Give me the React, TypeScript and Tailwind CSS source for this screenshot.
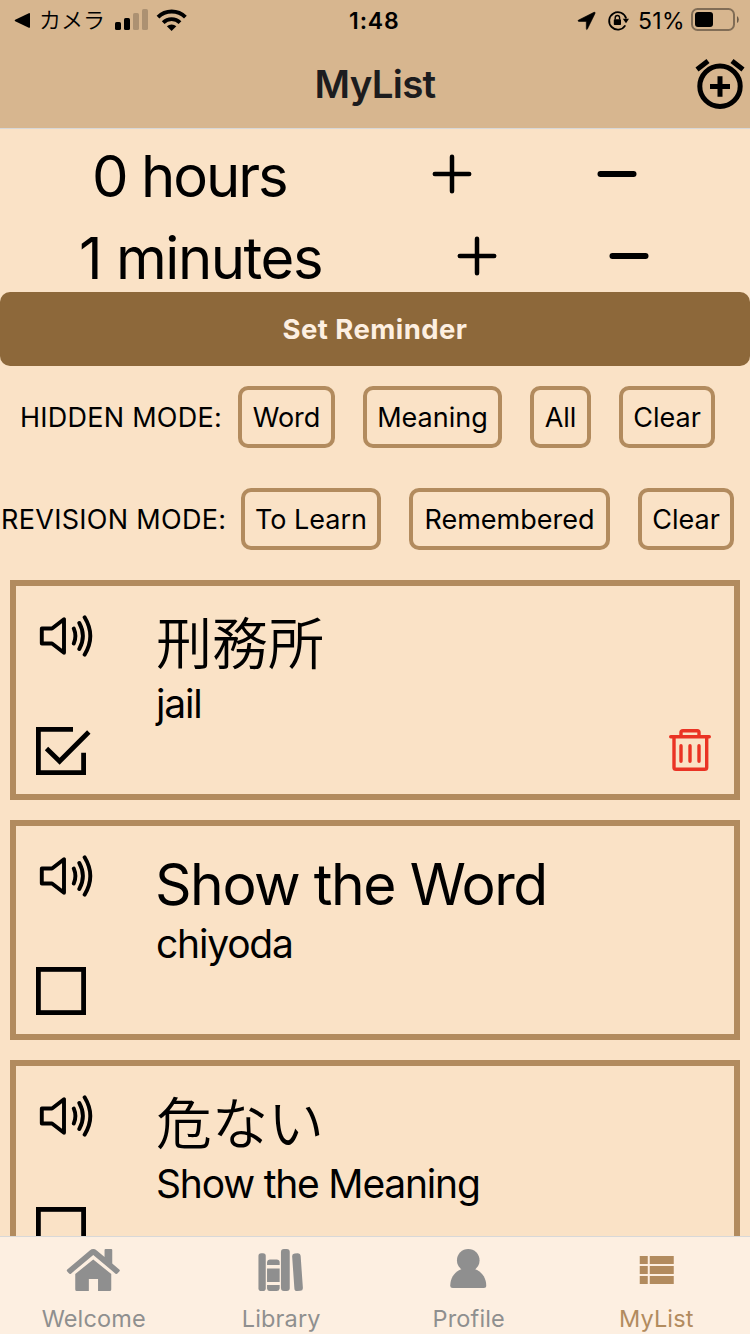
import React from "react";

function StatusBar() {
  return (
    <div className="flex h-10 items-center">
      <svg className="ml-3.5 h-10 w-[18px] shrink-0" viewBox="14 0 18 40">
        <path d="M15.200 19.800 28.800 13.200Q30 12.800 30 14v13q0 1.200-1.200.7L15.200 21.200Q14 20.500 15.200 19.800Z" />
      </svg>
      <span className="ml-[7px] w-[68px] text-[22px] leading-10 font-[350] whitespace-nowrap">カメラ</span>
      <svg className="ml-[6px] h-10 w-[76px] shrink-0" viewBox="113 0 76 40">
        <rect x="115" y="22" width="6" height="8" rx="1.6" />
        <rect x="124" y="18" width="6" height="12" rx="1.6" />
        <rect x="133" y="13" width="6" height="17" rx="1.6" opacity=".2" />
        <rect x="142" y="9" width="6" height="21" rx="1.6" opacity=".2" />
        <g fill="none" stroke="#000" strokeWidth="3.9">
          <path d="M158 17.2A19.4 19.4 0 0 1 185.400 17.200" />
          <path d="M163.200 22.600A12 12 0 0 1 180 22.600" />
        </g>
        <path d="M171.600 31 166.900 26.300A6.800 6.800 0 0 1 176.300 26.300Z" />
      </svg>
      <span className="ml-[160px] w-[56px] pt-px text-[23px] leading-10 font-semibold tracking-[0.900px] whitespace-nowrap">1:48</span>
      <svg className="ml-[172px] h-10 w-[56px] shrink-0" viewBox="577 0 56 40">
        <path d="M578.300 20.200 594 12.300Q595.600 11.800 595 13.500L587.400 29Q586.500 30.300 586.300 28.600V21.400H579Q577.300 21.200 578.300 20.200Z" stroke="#000" strokeWidth=".6" />
        <path d="M625.300 25.400A8.700 8.700 0 1 1 626.200 18.400" fill="none" stroke="#000" strokeWidth="1.800" />
        <path d="M622.800 18.800H629L626 23.200Z" />
        <rect x="613.800" y="19.300" width="7.200" height="5.800" rx=".8" />
        <path d="M615.200 19.500V17.700a2.200 2.200 0 0 1 4.400 0v1.800" fill="none" stroke="#000" strokeWidth="1.400" />
      </svg>
      <span className="ml-[5px] w-[50px] pt-px text-[23px] leading-10 tracking-[0.300px] whitespace-nowrap">51%</span>
      <svg className="ml-[2px] h-10 w-[50px] shrink-0" viewBox="690 0 50 40">
        <rect x="692" y="9" width="42" height="21" rx="5.500" fill="none" stroke="#000" strokeWidth="2" opacity=".4" />
        <rect x="695" y="12" width="18" height="15" rx="3" />
        <path d="M737 16q1.800 1 1.800 3.600T737 23Z" opacity=".5" />
      </svg>
    </div>
  );
}

function Header() {
  return (
    <header className="h-[129px] shrink-0 border-b border-[#d8d8d8] bg-[#d7b68f]">
      <StatusBar />
      <div className="flex h-[88px] justify-between">
        <div className="w-[60px]" />
        <h1 className="text-[38.500px] leading-[88px] font-semibold tracking-[-0.700px] text-[#1c1c1e]">MyList</h1>
        <svg className="h-[87px] w-[60px]" viewBox="690 40 60 87" fill="none" stroke="#000" strokeWidth="5">
          <circle cx="720" cy="86.300" r="20.200" />
          <path d="M710 86.500H730M720 76.300V96.700M697 69.500 708 61M743 69.500 732 61" />
        </svg>
      </div>
    </header>
  );
}

function Plus() {
  return (
    <svg className="h-[42px] w-[42px]" viewBox="-21 -21 42 42" stroke="#000" strokeWidth="4.500" strokeLinecap="round">
      <path d="M-17.200 0H17.200M0-17.200V17.200" />
    </svg>
  );
}

function Minus() {
  return (
    <svg className="h-[42px] w-[42px]" viewBox="-21 -21 42 42" stroke="#000" strokeWidth="6" strokeLinecap="round">
      <path d="M-16.500 0H16.500" />
    </svg>
  );
}

function Timer() {
  return (
    <section>
      <div className="flex h-[81px] items-start pt-6">
        <span className="ml-[92px] w-[339px] text-[58px] leading-[46px] tracking-[-2px]">0 hours</span>
        <Plus />
        <span className="w-[123px]" />
        <Minus />
      </div>
      <div className="flex h-[82px] items-start pt-[25px]">
        <span className="ml-[79px] w-[377px] text-[58px] leading-[46px] tracking-[-1.450px]">1 minutes</span>
        <Plus />
        <span className="w-[110px]" />
        <Minus />
      </div>
    </section>
  );
}

function ModeButton({ label, width }: { label: string; width: string }) {
  return (
    <button className={`${width} h-[62px] shrink-0 rounded-[10px] border-4 border-[#b28b5e] pt-0.5 text-[27px] whitespace-nowrap`}>
      {label}
    </button>
  );
}

function SoundIcon() {
  return (
    <svg className="h-[52px] w-[60px]" viewBox="36 610 60 52" fill="none" stroke="#000" strokeWidth="3.900" strokeLinecap="round" strokeLinejoin="round">
      <path d="M41.800 628.500H52L64 619.300V652.700L52 643.500H41.800Z" />
      <path d="M73.800 628.500Q77 636 73.800 643.500M79.300 623Q86.500 636 79.300 649M84.600 617.300Q96 636 84.600 654.700" />
    </svg>
  );
}

function CheckIcon({ checked }: { checked: boolean }) {
  return (
    <svg className="mt-[63px] h-[54px] w-[60px]" viewBox="36 725 60 54" fill="none" stroke="#000" strokeWidth="4.800">
      {checked ? (
        <>
          <path d="M73 729.400H38.400V772.600H83.600V752.700" />
          <path d="M46.500 748.500 59.600 761.300 88.800 732" />
        </>
      ) : (
        <rect x="38.400" y="729.400" width="45.200" height="43.200" />
      )}
    </svg>
  );
}

function TrashIcon() {
  return (
    <svg className="mt-[139px] h-[50px] w-[46px]" viewBox="667 725 46 50" fill="none" stroke="#ea3324" strokeWidth="3.400" strokeLinecap="round" strokeLinejoin="round">
      <path d="M670.700 736.700H709.300M674 737V767.500Q674 769.300 676 769.300H704.500Q706.700 769.300 706.700 767.500V737" />
      <path d="M681 736V732.500Q681 730.700 683 730.700H697.300Q699 730.700 699 732.500V736M681 745.700V761.200M690 745.700V761.200M699 745.700V761.200" />
    </svg>
  );
}

type Entry = { word: string; meaning: string; checked?: boolean; removable?: boolean; japanese?: boolean };

const entries: Entry[] = [
  { word: "刑務所", meaning: "jail", checked: true, removable: true, japanese: true },
  { word: "Show the Word", meaning: "chiyoda" },
  { word: "危ない", meaning: "Show the Meaning", japanese: true },
];

function Card({ entry }: { entry: Entry }) {
  return (
    <article className="flex h-[220px] shrink-0 border-[6px] border-[#b28b5e]">
      <div className="ml-5 flex w-[120px] flex-col pt-6">
        <SoundIcon />
        <CheckIcon checked={!!entry.checked} />
      </div>
      <div className="flex w-[511px] flex-col pt-[26px] whitespace-nowrap">
        <span className={entry.japanese ? "h-[66px] text-[56px] leading-[64px] font-[350]" : "-ml-px h-[66px] text-[57px] leading-[65px] tracking-[-1.450px]"}>{entry.word}</span>
        <span className="text-[39px] leading-[52px] tracking-[-1.200px]">{entry.meaning}</span>
      </div>
      {entry.removable && <TrashIcon />}
    </article>
  );
}

function HomeIcon() {
  return (
    <svg className="h-[46px] w-[60px]" viewBox="63.750 1247 60 46" fill="currentColor">
      <path d="M67 1269.500 89.500 1250.400Q93 1247.600 96.500 1250.400L104.300 1257V1250Q104.300 1249 105.300 1249H111Q112 1249 112 1250V1263.500L119 1269.500Q120.200 1270.500 119 1271.500L117.400 1273.300Q116.300 1274.500 115 1273.400L93 1255 71 1273.400Q69.700 1274.500 68.600 1273.300L67 1271.500Q66 1270.500 67 1269.500Z" />
      <path d="M75 1274 93 1259.500 111 1274V1289.500Q111 1291 109.500 1291H97.800V1279H88.600V1291H76.500Q75 1291 75 1289.500Z" />
    </svg>
  );
}

function BooksIcon() {
  return (
    <svg className="h-[46px] w-[60px]" viewBox="251.250 1247 60 46" fill="currentColor">
      <rect x="258.700" y="1253.300" width="7.300" height="37.700" rx="2.800" />
      <path d="M267.300 1265V1262Q267.500 1259.500 270 1259.500H277Q279.700 1259.500 279.900 1262V1265ZM267.300 1268.500H279.900V1282H267.300ZM267.300 1285H279.900V1288.500Q279.500 1291 277 1291H270Q267.600 1291 267.300 1288.500Z" />
      <rect x="281.200" y="1249" width="8.800" height="42" rx="3" />
      <rect x="293.500" y="1253.300" width="8.500" height="37.700" rx="2.800" transform="rotate(-4 297.750 1272)" />
    </svg>
  );
}

function PersonIcon() {
  return (
    <svg className="h-[46px] w-[60px]" viewBox="438.750 1247 60 46" fill="currentColor">
      <circle cx="468" cy="1260.300" r="11.300" />
      <path d="M461.500 1269C454.500 1271.500 450 1278 450 1285.500Q450 1288 452.500 1288H483.500Q486 1288 486 1285.500C486 1278 481.500 1271.500 474.500 1269Z" />
    </svg>
  );
}

function ListIcon() {
  return (
    <svg className="h-[46px] w-[60px]" viewBox="626.250 1247 60 46" fill="currentColor">
      <path d="M640 1256h8v8h-8zM650 1256h24v8h-24zM640 1266h8v8h-8zM650 1266h24v8h-24zM640 1276h8v8h-8zM650 1276h24v8h-24z" />
    </svg>
  );
}

function Tab({ label, icon, active }: { label: string; icon: React.ReactNode; active?: boolean }) {
  return (
    <div className={`flex flex-1 flex-col items-center pt-2.5 ${active ? "text-[#b28b5e]" : "text-[#8f8f8f]"}`}>
      {icon}
      <span className="mt-3 text-[23.500px] leading-7 tracking-[0.150px]">{label}</span>
    </div>
  );
}

export default function App() {
  return (
    <div className="flex h-[1334px] w-[750px] flex-col overflow-hidden bg-[#fae2c6] font-['Inter','Noto_Sans_CJK_JP',sans-serif] text-black">
      <Header />
      <main className="flex min-h-0 flex-1 flex-col overflow-hidden">
        <Timer />
        <button className="h-[74px] shrink-0 rounded-[10px] bg-[#8d683a] pt-0.5 text-[27.500px] font-bold tracking-[0.450px] text-[#fdefe1]">Set Reminder</button>
        <div className="flex h-[102px] shrink-0 items-center gap-7">
          <span className="ml-5 w-[190px] pt-0.5 text-[27px] tracking-[0.250px] whitespace-nowrap">HIDDEN MODE:</span>
          <ModeButton label="Word" width="w-[97px]" />
          <ModeButton label="Meaning" width="w-[139px]" />
          <ModeButton label="All" width="w-[61px]" />
          <ModeButton label="Clear" width="w-[96px]" />
        </div>
        <div className="flex h-[102px] shrink-0 items-center gap-7">
          <span className="ml-0.5 w-[211px] -translate-x-px pt-0.5 text-[27px] tracking-[0.300px] whitespace-nowrap">REVISION MODE:</span>
          <ModeButton label="To Learn" width="w-[140px]" />
          <ModeButton label="Remembered" width="w-[201px]" />
          <ModeButton label="Clear" width="w-[96px]" />
        </div>
        <div className="flex flex-col gap-5 px-2.5 pt-2.5">
          {entries.map((entry) => (
            <Card key={entry.word} entry={entry} />
          ))}
        </div>
      </main>
      <nav className="flex h-[98px] shrink-0 border-t border-[#d8d8d8] bg-[#fdefe1]">
        <Tab label="Welcome" icon={<HomeIcon />} />
        <Tab label="Library" icon={<BooksIcon />} />
        <Tab label="Profile" icon={<PersonIcon />} />
        <Tab label="MyList" icon={<ListIcon />} active />
      </nav>
    </div>
  );
}
